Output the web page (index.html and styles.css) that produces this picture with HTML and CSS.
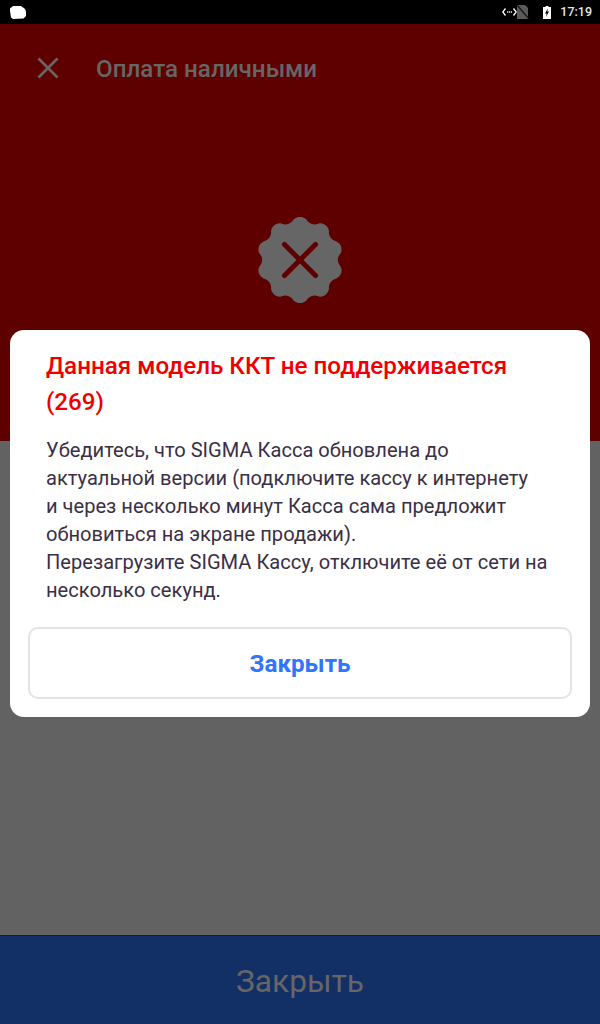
FILE: index.html

```html
<!DOCTYPE html>
<html lang="ru">
<head>
    <meta charset="UTF-8">
    <title>Оплата наличными</title>
    <link rel="stylesheet" href="styles.css">
</head>
<body>

<div class="status-bar">
    <svg class="notify-icon" width="16" height="13" viewBox="0 0 16 13">
        <path d="M3 0H11L14.500 2.500Q16 4 16 6.500V10L13.500 12.500L3 13L1 11.500L0 5V2.500Z" fill="#fff"/>
    </svg>
    <div class="status-right">
        <svg class="data-icon" width="15" height="8" viewBox="0 0 15 8">
            <path d="M3.500 .5L.8 4L3.500 7.500M11.500 .5L14.200 4L11.500 7.500" fill="none" stroke="#fff" stroke-width="1.300"/>
            <path d="M5 4H6.200M6.900 4H8.100M8.800 4H10" stroke="#eee" stroke-width="1.300"/>
        </svg>
        <svg class="sim-icon" width="12" height="14" viewBox="0 0 12 14">
            <path d="M0 0H8L11 3V14H0Z" fill="#5a5a5a"/>
            <path d="M0 0L12 14" stroke="#111" stroke-width="1.200"/>
        </svg>
        <svg class="battery-icon" width="8" height="13" viewBox="0 0 8 13">
            <path d="M2.500 0H5.500V1H8V13H0V1H2.500Z" fill="#fff"/>
            <path d="M4.800 2.500L2 7.500H3.700L3 11L6 5.500H4.300Z" fill="#000"/>
        </svg>
        <span class="clock">17:19</span>
    </div>
</div>

<div class="screen">
    <div class="result-top">
        <div class="toolbar">
            <svg class="close-icon" width="22" height="22" viewBox="0 0 22 22">
                <path d="M1.500 1.500L20.500 20.500M20.500 1.500L1.500 20.500" stroke="#666" stroke-width="2.600" fill="none"/>
            </svg>
            <span class="toolbar-title">Оплата наличными</span>
        </div>
        <svg class="error-badge" width="86" height="86" viewBox="-43 -43 86 86">
            <path fill="#666" d="M-6.410 -40.500A9 9 0 0 1 6.410 -40.500A9 9 0 0 0 18.610 -36.530A9 9 0 0 1 28.990 -28.990A9 9 0 0 0 36.530 -18.610A9 9 0 0 1 40.500 -6.410A9 9 0 0 0 40.500 6.410A9 9 0 0 1 36.530 18.610A9 9 0 0 0 28.990 28.990A9 9 0 0 1 18.610 36.530A9 9 0 0 0 6.410 40.500A9 9 0 0 1 -6.410 40.500A9 9 0 0 0 -18.610 36.530A9 9 0 0 1 -28.990 28.990A9 9 0 0 0 -36.530 18.610A9 9 0 0 1 -40.500 6.410A9 9 0 0 0 -40.500 -6.410A9 9 0 0 1 -36.530 -18.610A9 9 0 0 0 -28.990 -28.990A9 9 0 0 1 -18.610 -36.530A9 9 0 0 0 -6.410 -40.500Z"/>
            <path d="M-15.500 -15.500L15.500 15.500M15.500 -15.500L-15.500 15.500" stroke="#5f0000" stroke-width="5" stroke-linecap="round" fill="none"/>
        </svg>
    </div>
    <div class="result-middle"></div>
    <div class="bottom-bar">Закрыть</div>

    <div class="overlay">
        <div class="dialog">
            <h2 class="dialog-title">Данная модель ККТ не поддерживается (269)</h2>
            <p class="dialog-text">Убедитесь, что SIGMA Касса обновлена до актуальной версии (подключите кассу к интернету и&nbsp;через несколько минут Касса сама предложит обновиться на экране продажи).<br>Перезагрузите SIGMA Кассу, отключите её от сети на несколько секунд.</p>
            <button class="dialog-btn">Закрыть</button>
        </div>
    </div>
</div>

</body>
</html>
```

FILE: styles.css

```css
*{
    margin: 0;
    padding: 0;
    box-sizing: border-box;
}
html, body{
    height: 100%;
}
body{
    display: flex;
    flex-direction: column;
    font-family: Roboto, "Noto Sans", sans-serif;
    background: #000;
    overflow: hidden;
}
.status-bar{
    flex: 0 0 24px;
    display: flex;
    align-items: center;
    justify-content: space-between;
    padding: 0 8px 0 10px;
    background: #000;
}
.status-right{
    display: flex;
    align-items: center;
}
.sim-icon{
    margin-right: 14px;
}
.battery-icon{
    margin-right: 9px;
}
.clock{
    color: #e6e6e6;
    font-size: 12.500px;
    font-weight: 500;
    line-height: 24px;
}
.screen{
    flex: 1;
    display: flex;
    flex-direction: column;
    position: relative;
}
.result-top{
    flex: 0 0 417px;
    display: flex;
    flex-direction: column;
    align-items: center;
    background: #5f0000;
}
.toolbar{
    align-self: stretch;
    height: 88px;
    display: flex;
    align-items: center;
    padding: 0 0 0 37px;
}
.close-icon{
    margin-right: 37px;
}
.toolbar-title{
    margin-top: 2px;
    color: #666;
    font-size: 24.200px;
    font-weight: 500;
}
.error-badge{
    margin-top: 105px;
}
.result-middle{
    flex: 1;
    background: #626262;
}
.bottom-bar{
    flex: 0 0 89px;
    display: flex;
    align-items: center;
    justify-content: center;
    padding-top: 2px;
    background: #122f66;
    border-top: 1px solid #5f0000;
    color: #666;
    font-size: 31.700px;
}
.overlay{
    position: absolute;
    top: 306px;
    left: 10px;
    right: 10px;
}
.dialog{
    background: #fff;
    border-radius: 14px;
    padding: 18px;
}
.dialog-title{
    padding: 0 18px;
    color: #ee0000;
    font-size: 24.200px;
    font-weight: 500;
    line-height: 36px;
}
.dialog-text{
    padding: 0 18px;
    margin-top: 16px;
    color: #3a2f45;
    font-size: 20.100px;
    line-height: 28px;
}
.dialog-btn{
    display: block;
    width: 100%;
    height: 72px;
    margin-top: 23px;
    padding-top: 2px;
    background: #fff;
    border: 2px solid #e4e4e4;
    border-radius: 10px;
    color: #2e75ff;
    font-family: inherit;
    font-size: 24.200px;
    font-weight: 700;
}
```
